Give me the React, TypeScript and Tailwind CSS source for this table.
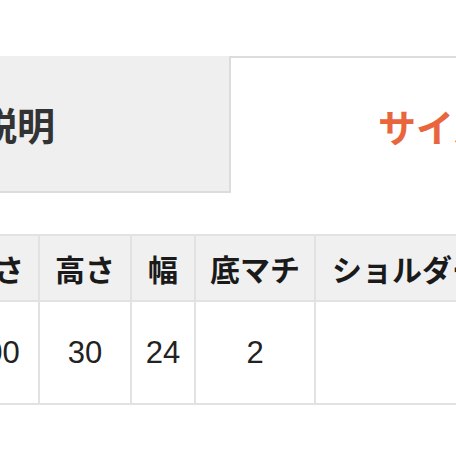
import React from "react";

const jp = { fontFamily: '"Noto Sans CJK JP", "Noto Sans", sans-serif' };
const num = { fontFamily: '"Liberation Sans", Arial, sans-serif' };

export default function App() {
  const headers = ["長さ", "高さ", "幅", "底マチ"];
  const values = ["100", "30", "24", "2"];
  const widths = ["w-[90px]", "w-[92px]", "w-[64px]", "w-[120px]"];
  return (
    <div className="w-[456px] h-[456px] overflow-hidden bg-white relative">
      <div className="pt-[56px] flex" style={jp}>
        <div className="w-[229px] h-[137px] shrink-0 bg-[#efefef] border-b-2 border-[#dcdcdc] flex items-center justify-end pr-[174px] overflow-hidden">
          <span className="whitespace-nowrap text-[38px] font-bold text-[#333] leading-none">商品説明</span>
        </div>
        <div className="w-[420px] shrink-0 h-[137px] bg-white border-t-2 border-l-2 border-[#dcdcdc] flex items-center pl-[147px]">
          <span className="whitespace-nowrap text-[38px] font-bold text-[#e8653d] leading-none">サイズ</span>
        </div>
      </div>
      <div className="mt-[41px] ml-[-50px] flex flex-col w-[560px] border-t-2 border-b-2 border-[#e2e2e2]">
        <div className="flex h-[66px] bg-[#f0f0f0] border-b-2 border-[#e2e2e2]">
          {headers.map((h, i) => (
            <div key={h} className={`${widths[i]} shrink-0 border-r-2 border-[#e2e2e2] flex items-center justify-center`}>
              <span className="text-[30px] font-bold text-[#1a1a1a] leading-none whitespace-nowrap" style={jp}>{h}</span>
            </div>
          ))}
          <div className="flex-1 flex items-center pl-[16px]">
            <span className="text-[30px] font-bold text-[#1a1a1a] leading-none whitespace-nowrap" style={jp}>ショルダー長さ</span>
          </div>
        </div>
        <div className="flex h-[101px] bg-white">
          {values.map((v, i) => (
            <div key={i} className={`${widths[i]} shrink-0 border-r-2 border-[#e2e2e2] flex items-center justify-center`}>
              <span className="text-[31px] text-[#222] leading-none" style={num}>{v}</span>
            </div>
          ))}
          <div className="flex-1" />
        </div>
      </div>
    </div>
  );
}
